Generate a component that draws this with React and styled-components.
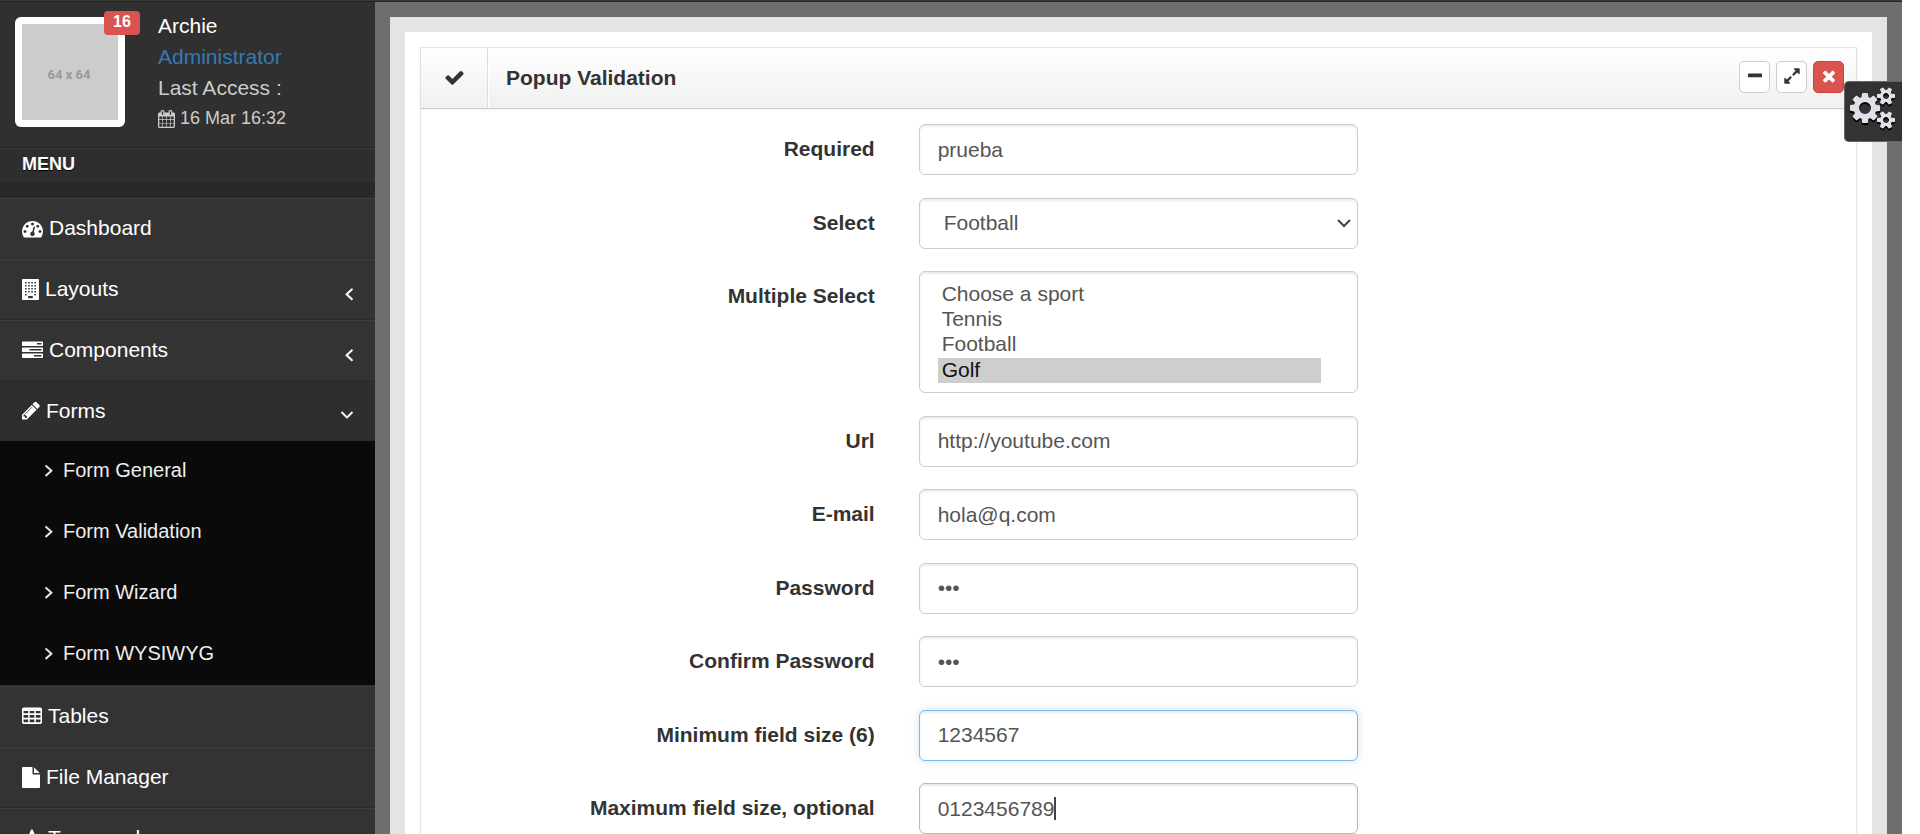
import React from "react";
import styled, { createGlobalStyle, css } from "styled-components";

const GlobalStyle = createGlobalStyle`
  *, *::before, *::after { box-sizing: border-box; }
  body {
    margin: 0;
    background: #fff;
    color: #333;
    font: 21px/30px "Liberation Sans", Arial, sans-serif;
  }
  ul, h2, h5, p { margin: 0; padding: 0; }
  ul { list-style: none; }
`;

/* ---------- icons ---------- */

const glyphs = {
  dashboard: {
    box: "0 0 1792 1792",
    w: 1,
    d: "M384 1152q0-53-37.5-90.5t-90.5-37.5-90.5 37.5-37.5 90.5 37.5 90.5 90.5 37.5 90.5-37.5 37.5-90.5zm192-448q0-53-37.5-90.5t-90.5-37.5-90.5 37.5-37.5 90.5 37.5 90.5 90.5 37.5 90.5-37.5 37.5-90.5zm428 481l101-382q6-26-7.5-48.5t-38.5-29.5-48 6.5-30 39.5l-101 382q-60 5-107 43.5t-63 98.5q-20 77 20 146t117 89 146-20 89-117q16-60-6-117t-72-91zm660-33q0-53-37.5-90.5t-90.5-37.5-90.5 37.5-37.5 90.5 37.5 90.5 90.5 37.5 90.5-37.5 37.5-90.5zm-640-640q0-53-37.5-90.5t-90.5-37.5-90.5 37.5-37.5 90.5 37.5 90.5 90.5 37.5 90.5-37.5 37.5-90.5zm448 192q0-53-37.5-90.5t-90.5-37.5-90.5 37.5-37.5 90.5 37.5 90.5 90.5 37.5 90.5-37.5 37.5-90.5zm320 448q0 261-141 483-19 29-54 29h-1402q-35 0-54-29-141-221-141-483 0-182 71-348t191-286 286-191 348-71 348 71 286 191 191 286 71 348z",
  },
  building: {
    box: "0 0 1408 1792",
    w: 17 / 21,
    d: "M0 64q0-64 64-64h1280q64 0 64 64v1664q0 64-64 64h-1280q-64 0-64-64zM256 256v128h128v-128zM512 256v128h128v-128zM768 256v128h128v-128zM1024 256v128h128v-128zM256 512v128h128v-128zM512 512v128h128v-128zM768 512v128h128v-128zM1024 512v128h128v-128zM256 768v128h128v-128zM512 768v128h128v-128zM768 768v128h128v-128zM1024 768v128h128v-128zM256 1024v128h128v-128zM512 1024v128h128v-128zM768 1024v128h128v-128zM1024 1024v128h128v-128zM256 1280v128h128v-128zM1024 1280v128h128v-128zM512 1440v192h384v-192z",
  },
  tasks: {
    box: "0 0 1792 1792",
    w: 1,
    d: "M1024 1408h640v-128h-640v128zm-384-512h1024v-128h-1024v128zm640-512h384v-128h-384v128zm512 832v256q0 26-19 45t-45 19h-1664q-26 0-45-19t-19-45v-256q0-26 19-45t45-19h1664q26 0 45 19t19 45zm0-512v256q0 26-19 45t-45 19h-1664q-26 0-45-19t-19-45v-256q0-26 19-45t45-19h1664q26 0 45 19t19 45zm0-512v256q0 26-19 45t-45 19h-1664q-26 0-45-19t-19-45v-256q0-26 19-45t45-19h1664q26 0 45 19t19 45z",
  },
  pencil: {
    box: "128 0 1536 1792",
    w: 18 / 21,
    d: "M491 1536l91-91-235-235-91 91v107h128v128h107zm523-928q0-22-22-22-10 0-17 7l-542 542q-7 7-7 17 0 22 22 22 10 0 17-7l542-542q7-7 7-17zm-54-192l416 416-832 832h-416v-416zm683 96q0 53-37 90l-166 166-416-416 166-165q36-38 90-38 53 0 91 38l235 234q37 39 37 91z",
  },
  table: {
    box: "0 0 1664 1792",
    w: 20 / 21,
    d: "M160 128h1344q66 0 113 47t47 113v1088q0 66-47 113t-113 47h-1344q-66 0-113-47t-47-113v-1088q0-66 47-113t113-47zM128 416v192h384v-192zM640 416v192h384v-192zM1152 416v192h384v-192zM128 768v224h384v-224zM640 768v224h384v-224zM1152 768v224h384v-224zM128 1152v224h384v-224zM640 1152v224h384v-224zM1152 1152v224h384v-224z",
  },
  file: {
    box: "128 0 1536 1792",
    w: 18 / 21,
    d: "M1152 512v-472q22 14 36 28l408 408q14 14 28 36h-472zm-128 32q0 40 28 68t68 28h544v1056q0 40-28 68t-68 28h-1344q-40 0-68-28t-28-68v-1600q0-40 28-68t68-28h800v544z",
  },
  font: {
    box: "0 0 1664 1792",
    w: 20 / 21,
    d: "M725 559l-170 450q33 0 136.500 2t160.500 2q19 0 57-2-87-253-184-452zM0 1664l2-79q23-7 56-12.500t57-10.500 49.500-14.500 44.500-29 31-50.500l237-616 280-724h128q8 14 11 21l205 480q33 78 106 257.500t114 274.500q15 34 58 144.500t72 168.500q20 45 35 57 19 15 88 29.500t84 20.500q6 38 6 57 0 4-.5 13t-.5 13q-63 0-190-8t-191-8q-76 0-215 7t-178 8q0-43 4-78l131-28q28-6 36-9 20-8 20-26 0-20-45-132t-99-238l-450-2q-26 58-76.500 195.500t-50.500 162.500q0 22 14 37.500t43.500 24.500 48.500 13.500 57 8.500 41 4q1 19 1 58 0 9-2 27-58 0-174.500-10t-174.500-10q-8 0-26.500 4t-21.500 4q-80 14-188 14z",
  },
  calendar: {
    box: "64 0 1664 1792",
    w: 17 / 18,
    d: "M192 1664h288v-288h-288v288zm352 0h320v-288h-320v288zm-352-352h288v-320h-288v320zm352 0h320v-320h-320v320zm-352-384h288v-288h-288v288zm736 736h320v-288h-320v288zm-384-736h320v-288h-320v288zm768 736h288v-288h-288v288zm-384-352h320v-320h-320v320zm-352-864v-288q0-13-9.5-22.5t-22.5-9.5h-64q-13 0-22.5 9.500t-9.500 22.500v288q0 13 9.500 22.500t22.500 9.500h64q13 0 22.500-9.500t9.500-22.500zm736 864h288v-320h-288v320zm-384-384h320v-288h-320v288zm384 0h288v-288h-288v288zm32-480v-288q0-13-9.500-22.500t-22.500-9.500h-64q-13 0-22.500 9.500t-9.500 22.500v288q0 13 9.500 22.500t22.500 9.500h64q13 0 22.500-9.500t9.500-22.500zm384-64v1280q0 52-38 90t-90 38h-1408q-52 0-90-38t-38-90v-1280q0-52 38-90t90-38h128v-96q0-66 47-113t113-47h64q66 0 113 47t47 113v96h384v-96q0-66 47-113t113-47h64q66 0 113 47t47 113v96h128q52 0 90 38t38 90z",
  },
  angleLeft: {
    box: "576 0 640 1792",
    w: 8 / 21,
    bold: true,
    d: "M1203 544q0 13-10 23l-393 393 393 393q10 10 10 23t-10 23l-50 50q-10 10-23 10t-23-10l-466-466q-10-10-10-23t10-23l466-466q10-10 23-10t23 10l50 50q10 10 10 23z",
  },
  angleRight: {
    box: "576 0 640 1792",
    w: 8 / 21,
    bold: true,
    d: "M1171 960q0 13-10 23l-466 466q-10 10-23 10t-23-10l-50-50q-10-10-10-23t10-23l393-393-393-393q-10-10-10-23t10-23l50-50q10-10 23-10t23 10l466 466q10 10 10 23z",
  },
  angleDown: {
    box: "384 0 1024 1792",
    w: 12 / 21,
    bold: true,
    d: "M1395 736q0 13-10 23l-466 466q-10 10-23 10t-23-10l-466-466q-10-10-10-23t10-23l50-50q10-10 23-10t23 10l393 393 393-393q10-10 23-10t23 10l50 50q10 10 10 23z",
  },
  check: {
    box: "0 0 1792 1792",
    w: 1,
    d: "M1671 566q0 40-28 68l-724 724-136 136q-28 28-68 28t-68-28l-136-136-362-362q-28-28-28-68t28-68l136-136q28-28 68-28t68 28l294 295 656-657q28-28 68-28t68 28l136 136q28 28 28 68z",
  },
  minus: {
    box: "0 0 1792 1792",
    w: 1,
    d: "M1600 736v192q0 40-28 68t-68 28h-1216q-40 0-68-28t-28-68v-192q0-40 28-68t68-28h1216q40 0 68 28t28 68z",
  },
  expand: {
    box: "0 0 1792 1792",
    w: 1,
    d: "M883 1056q0 13-10 23l-332 332 144 144q19 19 19 45t-19 45-45 19h-448q-26 0-45-19t-19-45v-448q0-26 19-45t45-19 45 19l144 144 332-332q10-10 23-10t23 10l114 114q10 10 10 23zm781-864v448q0 26-19 45t-45 19-45-19l-144-144-332 332q-10 10-23 10t-23-10l-114-114q-10-10-10-23t10-23l332-332-144-144q-19-19-19-45t19-45 45-19h448q26 0 45 19t19 45z",
  },
  times: {
    box: "0 0 1792 1792",
    w: 1,
    d: "M1490 1322q0 40-28 68l-136 136q-28 28-68 28t-68-28l-294-294-294 294q-28 28-68 28t-68-28l-136-136q-28-28-28-68t28-68l294-294-294-294q-28-28-28-68t28-68l136-136q28-28 68-28t68 28l294 294 294-294q28-28 68-28t68 28l136 136q28 28 28 68t-28 68l-294 294 294 294q28 28 28 68z",
  },
  cogs: {
    box: "0 0 1920 1792",
    w: 45 / 42,
    d: "M896 896q0-106-75-181t-181-75-181 75-75 181 75 181 181 75 181-75 75-181zm768 512q0-52-38-90t-90-38-90 38-38 90q0 53 37.500 90.500t90.500 37.500 90.500-37.500 37.500-90.500zm0-1024q0-52-38-90t-90-38-90 38-38 90q0 53 37.500 90.500t90.500 37.500 90.500-37.500 37.500-90.500zm-384 421v185q0 10-7 19.500t-16 10.500l-155 24q-11 35-32 76 34 48 90 115 7 10 7 20 0 12-7 19-23 30-82.500 89.500t-78.500 59.500q-11 0-21-7l-115-90q-37 19-77 31-11 108-23 155-7 24-30 24h-186q-11 0-20-7.500t-10-17.500l-23-153q-34-10-75-31l-118 89q-7 7-20 7-11 0-21-8-144-133-144-160 0-9 7-19 10-14 41-53t47-61q-23-44-35-82l-152-24q-10-1-17-9.500t-7-19.500v-185q0-10 7-19.500t16-10.500l155-24q11-35 32-76-34-48-90-115-7-11-7-20 0-12 7-20 22-30 82-89t79-59q11 0 21 7l115 90q34-18 77-32 11-108 23-154 7-24 30-24h186q11 0 20 7.500t10 17.500l23 153q34 10 75 31l118-89q8-7 20-7 11 0 21 8 144 133 144 160 0 9-7 19-12 16-42 54t-45 60q23 48 34 82l152 23q10 2 17 10.500t7 19.500zm640 533v140q0 16-149 31-12 27-30 52 51 113 51 138 0 4-4 7-122 71-124 71-8 0-46-47t-52-68q-20 2-30 2t-30-2q-14 21-52 68t-46 47q-2 0-124-71-4-3-4-7 0-25 51-138-18-25-30-52-149-15-149-31v-140q0-16 149-31 13-29 30-52-51-113-51-138 0-4 4-7 4-2 35-20t59-34 30-16q8 0 46 46.500t52 67.500q20-2 30-2t30 2q51-71 92-112l6-2q4 0 124 70 4 3 4 7 0 25-51 138 17 23 30 52 149 15 149 31zm0-1024v140q0 16-149 31-12 27-30 52 51 113 51 138 0 4-4 7-122 71-124 71-8 0-46-47t-52-68q-20 2-30 2t-30-2q-14 21-52 68t-46 47q-2 0-124-71-4-3-4-7 0-25 51-138-18-25-30-52-149-15-149-31v-140q0-16 149-31 13-29 30-52-51-113-51-138 0-4 4-7 4-2 35-20t59-34 30-16q8 0 46 46.500t52 67.500q20-2 30-2t30 2q51-71 92-112l6-2q4 0 124 70 4 3 4 7 0 25-51 138 17 23 30 52 149 15 149 31z",
  },
};

const Svg = styled.svg`
  display: block;
  flex: none;
  fill: currentColor;
`;

const Icon = ({ name, size = 21 }) => {
  const g = glyphs[name];
  return (
    <Svg
      viewBox={g.box}
      width={Math.round(g.w * size)}
      height={size}
      preserveAspectRatio="none"
      aria-hidden="true"
    >
      <path
        fillRule="evenodd"
        d={g.d}
        stroke={g.bold ? "currentColor" : "none"}
        strokeWidth="40"
      />
    </Svg>
  );
};

/* ---------- page frame ---------- */

const Page = styled.div`
  position: relative;
  display: grid;
  grid-template-columns: 375px minmax(0, 1fr);
  grid-template-rows: auto minmax(0, 1fr);
  height: 100vh;
  margin-right: 18px;
  overflow: hidden;
`;

const TopEdge = styled.div`
  grid-column: 1 / -1;
  height: 2px;
  background: #3a3a3a;
  border-bottom: 1px solid #222;
`;

/* ---------- sidebar ---------- */

const Sidebar = styled.aside`
  background: #333;
  overflow: hidden;
`;

const UserCard = styled.div`
  display: flex;
  gap: 33px;
  height: 146px;
  padding: 8px 15px 0;
  background: #303030;
  border-bottom: 1px solid #262626;
  color: #ccc;
  line-height: 31px;
`;

const Avatar = styled.div`
  position: relative;
  width: 110px;
  height: 110px;
  margin-top: 7px;
  padding: 7px;
  background: #fff;
  border-radius: 6px;
`;

const AvatarImage = styled.div`
  display: grid;
  place-items: center;
  height: 100%;
  padding: 6px 2px 0 0;
  background: #ccc;
  color: #999;
  font: bold 13px/20px Roboto, sans-serif;
`;

const Badge = styled.span`
  position: absolute;
  top: -6px;
  right: -15px;
  width: 36px;
  height: 24px;
  border-radius: 4px;
  background: #d9534f;
  color: #fff;
  font-size: 16px;
  font-weight: bold;
  line-height: 21px;
  text-align: center;
`;

const UserName = styled.h5`
  font-size: 21px;
  font-weight: normal;
  color: #fff;
`;

const RoleLink = styled.a`
  display: block;
  color: #337ab7;
  text-decoration: none;
`;

const AccessTime = styled.p`
  display: flex;
  align-items: center;
  gap: 5px;
  font-size: 18px;
`;

const MenuHeading = styled.h2`
  height: 34px;
  padding-left: 22px;
  border-top: 1px solid #3b3b3b;
  background: #2e2e2e;
  color: #fff;
  font-size: 18px;
  line-height: 30px;
  text-shadow: 0 1px 0 #000;
`;

const MenuDivider = styled.div`
  height: 16px;
  background: #292929;
`;

const MenuLink = styled.a`
  display: flex;
  align-items: center;
  gap: 6px;
  height: 61px;
  padding: 0 22px 1px;
  border-top: 1px solid #3e3e3e;
  border-bottom: 1px solid #2c2c2c;
  color: #fff;
  text-decoration: none;
  ${(p) =>
    p.$open &&
    css`
      height: 60px;
      border-color: #2b2b2b;
      background: #2e2e2e;
    `}
`;

const Arrow = styled.span`
  margin-left: auto;
  padding-top: 8px;
`;

const SubMenu = styled.ul`
  background: #0a0a0a;
  border-bottom: 1px solid #2c2c2c;
`;

const SubLink = styled.a`
  display: flex;
  align-items: center;
  gap: 10px;
  height: 61px;
  padding: 0 45px 3px;
  color: #eee;
  font-size: 20px;
  text-decoration: none;
`;

const menu = [
  { icon: "dashboard", text: "Dashboard" },
  { icon: "building", text: "Layouts", arrow: "angleLeft" },
  { icon: "tasks", text: "Components", arrow: "angleLeft" },
  {
    icon: "pencil",
    text: "Forms",
    arrow: "angleDown",
    items: ["Form General", "Form Validation", "Form Wizard", "Form WYSIWYG"],
  },
  { icon: "table", text: "Tables" },
  { icon: "file", text: "File Manager" },
  { icon: "font", text: "Typography" },
];

/* ---------- content ---------- */

const Outer = styled.main`
  padding: 15px 15px 0;
  background: #6e6e6e;
  overflow: hidden;
`;

const Inner = styled.div`
  min-height: 100%;
  padding: 15px 15px 0;
  background: #e4e4e4;
`;

const Sheet = styled.div`
  min-height: 100vh;
  padding: 15px 15px 0;
  background: #fff;
`;

const Panel = styled.section`
  min-height: 100vh;
  border: 1px solid #e5e5e5;
  box-shadow: 0 0 4px rgba(0, 0, 0, 0.04);
`;

const PanelHeader = styled.header`
  display: flex;
  height: 61px;
  background: linear-gradient(#fff, #f0f0f0);
  border-bottom: 1px solid #ccc;
  box-shadow: 0 1px 3px rgba(0, 0, 0, 0.06);
`;

const PanelIcon = styled.div`
  display: grid;
  place-items: center;
  width: 67px;
  padding-bottom: 1px;
  border-right: 1px solid #ddd;
`;

const PanelTitle = styled.h5`
  flex: 1;
  padding-left: 17px;
  border-left: 1px solid #fff;
  font-size: 21px;
  line-height: 59px;
`;

const Toolbar = styled.div`
  display: flex;
  gap: 6px;
  padding: 13px 12px 0 0;
`;

const ToolButton = styled.button`
  display: grid;
  place-items: center;
  width: 31px;
  height: 32px;
  padding: 0 0 3px;
  border: 1px solid ${(p) => (p.$danger ? "#d43f3a" : "#ccc")};
  border-radius: 5px;
  background: ${(p) => (p.$danger ? "#d9534f" : "#fff")};
  color: ${(p) => (p.$danger ? "#fff" : "#333")};
`;

const Form = styled.form`
  display: flex;
  flex-direction: column;
  justify-content: space-between;
  min-height: 710px;
  margin: 15px -8px 0;
`;

const FormRow = styled.div`
  display: grid;
  grid-template-columns: repeat(3, minmax(0, 1fr));
`;

const Label = styled.label`
  padding: 10px 22px 0;
  font-weight: bold;
  text-align: right;
`;

const FieldCell = styled.div`
  position: relative;
  padding: 0 22px;
`;

const control = css`
  display: block;
  width: 100%;
  border: 1px solid ${(p) => (p.$focus ? p.$focus : "#ccc")};
  border-radius: 6px;
  background: #fff;
  box-shadow: inset 0 2px 2px rgba(0, 0, 0, 0.075)
    ${(p) => p.$glow && ", 0 0 8px rgba(102, 175, 233, 0.35)"};
  color: #555;
  font: inherit;
  outline: none;
`;

const Input = styled.input`
  ${control}
  height: 51px;
  padding: 0 18px;
`;

const Select = styled.select`
  ${control}
  appearance: none;
  height: 51px;
  padding: 0 30px 0 24px;
`;

const SelectChevron = styled.svg`
  position: absolute;
  top: 21px;
  right: 29px;
  width: 14px;
  height: 9px;
  fill: none;
  stroke: #444;
  stroke-width: 2;
  pointer-events: none;
`;

const MultiSelect = styled.select`
  ${control}
  height: 122px;
  padding: 10px 36px 8px 18px;
  line-height: normal;
  overflow: hidden;

  option { padding: 0 4px 1px; }
  option:checked {
    background: #cecece linear-gradient(#cecece, #cecece);
    color: #111;
  }
`;

const Caret = styled.span`
  position: absolute;
  top: 14px;
  left: 157px;
  width: 2px;
  height: 23px;
  background: #444;
`;

const SettingsTab = styled.button`
  position: absolute;
  top: 81px;
  right: 0;
  display: grid;
  place-items: center;
  width: 58px;
  height: 61px;
  padding: 0 3px 8px 0;
  border: 1px solid #666;
  border-right: 0;
  border-radius: 5px 0 0 5px;
  background: #333;
  color: #e0e0e8;

  svg { filter: drop-shadow(0 2px 0 #000); }
`;

const sports = ["Choose a sport", "Tennis", "Football", "Golf"];

const Field = ({ id, label, children }) => (
  <FormRow>
    <Label htmlFor={id}>{label}</Label>
    <FieldCell>{children}</FieldCell>
  </FormRow>
);

export default function App() {
  return (
    <>
      <GlobalStyle />
      <Page>
        <TopEdge />
        <Sidebar>
          <UserCard>
            <Avatar>
              <AvatarImage>64 x 64</AvatarImage>
              <Badge>16</Badge>
            </Avatar>
            <div>
              <UserName>Archie</UserName>
              <RoleLink href="#admin">Administrator</RoleLink>
              <p>Last Access :</p>
              <AccessTime>
                <Icon name="calendar" size={18} />
                16 Mar 16:32
              </AccessTime>
            </div>
          </UserCard>
          <MenuHeading>MENU</MenuHeading>
          <MenuDivider />
          <nav>
            <ul>
              {menu.map(({ icon, text, arrow, items }) => (
                <li key={text}>
                  <MenuLink href="#menu" $open={!!items}>
                    <Icon name={icon} />
                    {text}
                    {arrow && (
                      <Arrow>
                        <Icon name={arrow} />
                      </Arrow>
                    )}
                  </MenuLink>
                  {items && (
                    <SubMenu>
                      {items.map((item) => (
                        <li key={item}>
                          <SubLink href="#form">
                            <Icon name="angleRight" size={20} />
                            {item}
                          </SubLink>
                        </li>
                      ))}
                    </SubMenu>
                  )}
                </li>
              ))}
            </ul>
          </nav>
        </Sidebar>
        <Outer>
          <Inner>
            <Sheet>
              <Panel>
                <PanelHeader>
                  <PanelIcon>
                    <Icon name="check" />
                  </PanelIcon>
                  <PanelTitle>Popup Validation</PanelTitle>
                  <Toolbar>
                    <ToolButton type="button" aria-label="Collapse">
                      <Icon name="minus" size={18} />
                    </ToolButton>
                    <ToolButton type="button" aria-label="Full screen">
                      <Icon name="expand" size={18} />
                    </ToolButton>
                    <ToolButton type="button" aria-label="Close" $danger>
                      <Icon name="times" size={18} />
                    </ToolButton>
                  </Toolbar>
                </PanelHeader>
                <Form>
                  <Field id="req" label="Required">
                    <Input id="req" type="text" defaultValue="prueba" />
                  </Field>
                  <Field id="sport" label="Select">
                    <Select id="sport" defaultValue="Football">
                      {sports.map((s) => (
                        <option key={s}>{s}</option>
                      ))}
                    </Select>
                    <SelectChevron viewBox="0 0 14 9" aria-hidden="true">
                      <path d="M1 1l6 6 6-6" />
                    </SelectChevron>
                  </Field>
                  <Field id="sports" label="Multiple Select">
                    <MultiSelect id="sports" multiple size={4} defaultValue={["Golf"]}>
                      {sports.map((s) => (
                        <option key={s}>{s}</option>
                      ))}
                    </MultiSelect>
                  </Field>
                  <Field id="url" label="Url">
                    <Input id="url" type="text" defaultValue="http://youtube.com" />
                  </Field>
                  <Field id="email" label="E-mail">
                    <Input id="email" type="text" defaultValue="hola@q.com" />
                  </Field>
                  <Field id="pass" label="Password">
                    <Input id="pass" type="password" defaultValue="abc" />
                  </Field>
                  <Field id="pass2" label="Confirm Password">
                    <Input id="pass2" type="password" defaultValue="abc" />
                  </Field>
                  <Field id="min" label="Minimum field size (6)">
                    <Input id="min" type="text" defaultValue="1234567" $focus="#7db8e6" $glow />
                  </Field>
                  <Field id="max" label="Maximum field size, optional">
                    <Input id="max" type="text" defaultValue="0123456789" $focus="#a3bfd9" />
                    <Caret />
                  </Field>
                </Form>
              </Panel>
            </Sheet>
          </Inner>
        </Outer>
        <SettingsTab type="button" aria-label="Settings">
          <Icon name="cogs" size={42} />
        </SettingsTab>
      </Page>
    </>
  );
}
